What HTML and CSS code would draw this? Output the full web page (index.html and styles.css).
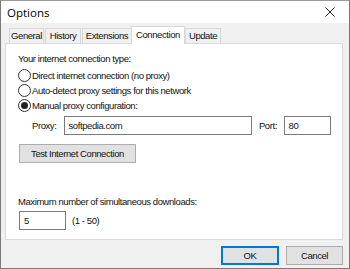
FILE: index.html
```html
<!DOCTYPE html>
<html>
<head>
<meta charset="utf-8">
<link rel="stylesheet" href="styles.css">
</head>
<body>
<div class="window">
  <div class="titlebar">
    <span class="title">Options</span>
    <svg class="close" width="10" height="10" viewBox="0 0 10 10"><path d="M0.5 0.5L9.5 9.5M9.5 0.5L0.5 9.5" stroke="#222" stroke-width="1"/></svg>
  </div>
  <div class="client">
    <div class="tabs">
      <div class="tab first">General</div>
      <div class="tab">History</div>
      <div class="tab">Extensions</div>
      <div class="tab active">Connection</div>
      <div class="tab">Update</div>
    </div>
    <div class="panel">
      <div class="label">Your internet connection type:</div>
      <div class="radios">
        <div class="radio"><span class="dot"></span>Direct internet connection (no proxy)</div>
        <div class="radio"><span class="dot"></span>Auto-detect proxy settings for this network</div>
        <div class="radio"><span class="dot checked"></span>Manual proxy configuration:</div>
      </div>
      <div class="proxyrow">
        <span class="plabel">Proxy:</span>
        <div class="input proxy">softpedia.com</div>
        <span class="portlabel">Port:</span>
        <div class="input port">80</div>
      </div>
      <div class="btn test">Test Internet Connection</div>
      <div class="label maxlabel">Maximum number of simultaneous downloads:</div>
      <div class="dlrow">
        <div class="input dl">5</div>
        <span class="range">(1 - 50)</span>
      </div>
    </div>
    <div class="buttons">
      <div class="btn ok">OK</div>
      <div class="btn cancel">Cancel</div>
    </div>
  </div>
</div>
</body>
</html>
```
FILE: styles.css
```css
html, body { margin: 0; padding: 0; }
body { width: 350px; height: 269px; overflow: hidden; font-family: "Liberation Sans", Arial, sans-serif; font-size: 9.5px; letter-spacing: -0.42px; color: #111; }
.window { box-sizing: border-box; width: 350px; height: 269px; border: 1px solid #7a7a7a; border-top-color: #9a9a9a; background: #f0f0f0; display: flex; flex-direction: column; }
.titlebar { height: 22px; background: #fff; display: flex; align-items: center; justify-content: space-between; padding: 0 14px 0 6px; flex: none; }
.title { font-family: "Open Sans", "Noto Sans", sans-serif; font-size: 11.5px; letter-spacing: 0; color: #000; }
.close { display: block; }
.client { flex: 1; display: flex; flex-direction: column; padding: 3px 6px 0 4px; }
.tabs { display: flex; align-items: flex-end; height: 18px; padding-left: 4px; }
.tab { box-sizing: border-box; height: 16px; line-height: 14px; padding: 0; border: 1px solid #d9d9d9; border-bottom: none; margin-left: 1px; background: #f0f0f0; text-align: center; white-space: nowrap; }
.tab.first { margin-left: 0; width: 35px; }
.tab:nth-child(2) { width: 36px; }
.tab:nth-child(3) { width: 50px; }
.tab.active { width: 54px; height: 18px; background: #fff; line-height: 16px; margin: 0 -1px 0 -1px; position: relative; z-index: 1; }
.tab:nth-child(5) { width: 36px; }
.panel { box-sizing: border-box; height: 197px; background: #fff; border: 1px solid #d9d9d9; margin-top: -1px; padding: 9px 11px 0 12px; display: flex; flex-direction: column; }
.label { line-height: 12px; }
.radios { display: flex; flex-direction: column; gap: 2px; margin-top: 4px; }
.radio { display: flex; align-items: center; height: 13px; }
.dot { box-sizing: border-box; width: 13px; height: 13px; border: 1px solid #333; border-radius: 50%; background: #fff; margin-right: 1px; display: flex; align-items: center; justify-content: center; }
.dot.checked::after { content: ""; width: 7px; height: 7px; border-radius: 50%; background: #222; }
.proxyrow { display: flex; align-items: center; margin-top: 4px; }
.plabel { margin-left: 14px; width: 32px; }
.input { box-sizing: border-box; height: 19px; border: 1px solid #7a7a7a; background: #fff; padding: 2px 4px; line-height: 13px; }
.proxy { width: 191px; }
.portlabel { margin-left: 7px; width: 25px; }
.port { width: 48px; }
.btn { box-sizing: border-box; border: 1px solid #adadad; background: #e1e1e1; display: flex; align-items: center; justify-content: center; height: 19px; }
.test { width: 117px; margin-top: 9px; margin-left: 1px; }
.maxlabel { margin-top: 33px; }
.dlrow { display: flex; align-items: center; margin-top: 3px; margin-left: 1px; }
.dl { width: 47px; height: 19px; }
.range { margin-left: 6px; }
.buttons { display: flex; justify-content: flex-end; gap: 7px; margin-top: 6px; }
.ok { width: 58px; border: 2px solid #0078d7; }
.cancel { width: 57px; }
```
